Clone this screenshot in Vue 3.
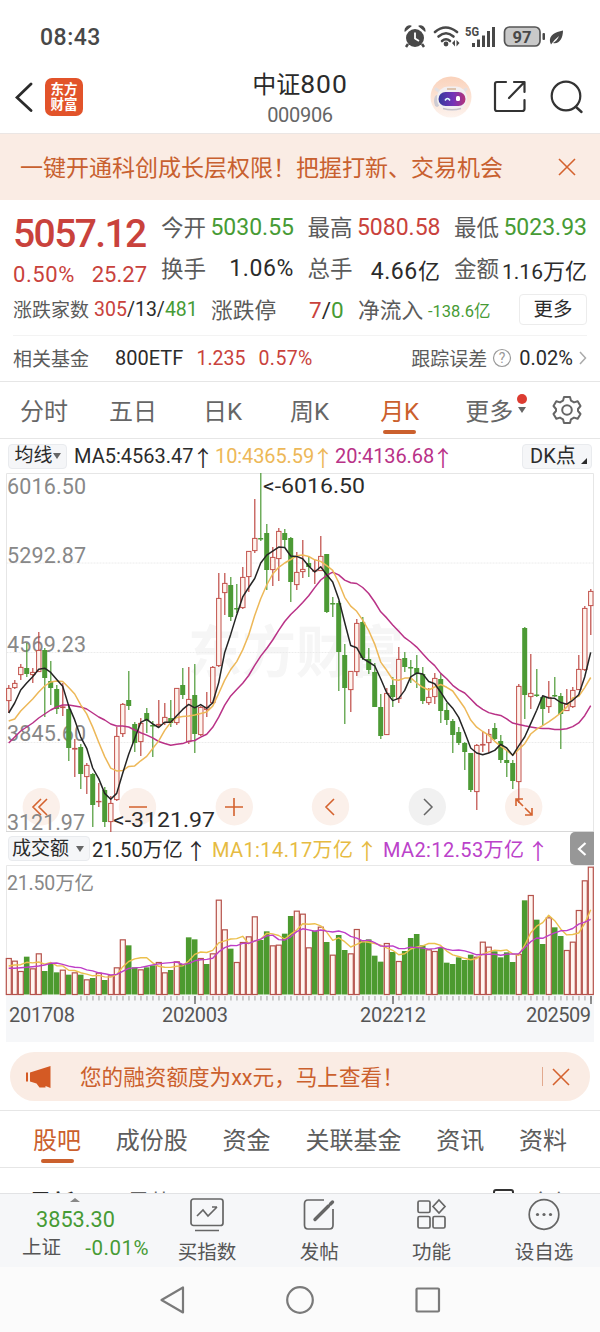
<template>
  <div class="page">
    <div class="status-bar">
      <span class="clock">08:43</span>
      <svg class="status-icons" width="164" height="28" viewBox="0 0 164 28">
        <g fill="#484848" stroke="none">
          <circle cx="11" cy="15" r="9" />
          <path d="M1 8a5 5 0 0 1 6-5zM21 8a5 5 0 0 0-6-5z" stroke="#484848" stroke-width="1.2" stroke-linejoin="round" />
          <path d="M4 21l-2 3M18 21l2 3" stroke="#484848" stroke-width="2.5" />
        </g>
        <path d="M11 9.5v6l4 2.5" fill="none" stroke="#fff" stroke-width="1.8" />
        <g fill="none" stroke="#484848" stroke-width="2.6" stroke-linecap="round">
          <path d="M31 9q10.500-9 22 0" />
          <path d="M34.500 13.500q7.500-6.500 15 0" />
          <path d="M38 18q4-3.500 8 0" />
        </g>
        <circle cx="42" cy="21" r="2.4" fill="#484848" />
        <path d="M48 20l3-3v6.500zM55.500 20l-3-3v6.500z" fill="#484848" />
        <text x="61" y="13" class="net" textLength="14" lengthAdjust="spacingAndGlyphs">5G</text>
        <g fill="#484848">
          <rect x="68" y="20" width="3" height="4" /><rect x="73" y="16.500" width="3" height="7.500" />
          <rect x="78" y="12.500" width="3" height="11.500" /><rect x="83" y="8" width="3" height="16" />
          <rect x="88" y="4" width="3" height="20" />
        </g>
        <rect x="100.500" y="4" width="35.500" height="19" rx="5" fill="#c9c9c9" stroke="#555" stroke-width="1.7" />
        <text x="108.500" y="20" class="batt" textLength="19" lengthAdjust="spacingAndGlyphs">97</text>
        <rect x="138.500" y="10" width="2.500" height="7" rx="1" fill="#484848" />
        <path d="M146 19c-1-7 5-10 13-11.500c0 8-4 14-10 12.500q4-2 6-7q-4 3-8 8.500z" fill="#484848" />
      </svg>
    </div>

    <header class="nav">
      <svg class="back" width="18" height="30" viewBox="0 0 18 30">
        <path d="M16 2L2 15.500L16 28.500" fill="none" stroke="#2b2b2b" stroke-width="2.8" stroke-linecap="round" />
      </svg>
      <div class="logo"><span>东方</span><span>财富</span></div>
      <div class="title">
        <h1>中证<b>800</b></h1>
        <p>000906</p>
      </div>
      <svg class="robot" width="42" height="42" viewBox="0 0 42 42">
        <defs>
          <linearGradient id="halo" x1="0" y1="0" x2="0" y2="1">
            <stop offset="0" stop-color="#fad2bb" /><stop offset="1" stop-color="#fdf3ee" />
          </linearGradient>
          <linearGradient id="visor" x1="0" y1="0" x2="1" y2="0">
            <stop offset="0" stop-color="#33389c" /><stop offset="0.55" stop-color="#7433b8" /><stop offset="1" stop-color="#b53378" />
          </linearGradient>
        </defs>
        <circle cx="21" cy="21" r="20.500" fill="url(#halo)" />
        <path d="M6 13l4 3M36 13l-3 3" stroke="#e4dfe0" stroke-width="3" stroke-linecap="round" />
        <ellipse cx="7" cy="25" rx="3" ry="6" fill="#cfccd3" />
        <rect x="7" y="10.500" width="30" height="24" rx="11.500" fill="#f2eff1" />
        <path d="M13 32.500q9 2.500 18 0" fill="none" stroke="#c6c1c8" stroke-width="1.500" />
        <path d="M17 13h9" stroke="#dcc3ae" stroke-width="2" />
        <rect x="8.500" y="16" width="27" height="14" rx="7" fill="url(#visor)" />
        <path d="M15 24.500q2.500-4 5 0" fill="none" stroke="#dff" stroke-width="1.500" />
        <rect x="26" y="20" width="4" height="5" rx="1.500" fill="#fff" />
      </svg>
      <svg class="share" width="34" height="34" viewBox="0 0 34 34">
        <path d="M13 2H4Q2 2 2 4V29Q2 31 4 31H29Q31.500 31 31.500 29V20M21 2H31.500V12M31 2.500L16 18" fill="none" stroke="#333" stroke-width="2.200" stroke-linecap="round" stroke-linejoin="round" />
      </svg>
      <svg class="search" width="34" height="34" viewBox="0 0 34 34">
        <circle cx="16" cy="16" r="14.300" fill="none" stroke="#333" stroke-width="2.200" />
        <path d="M26 27l5.500 5" stroke="#333" stroke-width="2.400" stroke-linecap="round" />
      </svg>
    </header>

    <div class="banner">
      <span>一键开通科创成长层权限！把握打新、交易机会</span>
      <svg width="18" height="18" viewBox="0 0 18 18"><path d="M1 1L17 17M17 1L1 17" stroke="#d4622e" stroke-width="1.600" /></svg>
    </div>

    <section class="quote">
      <div class="quote-top">
        <div class="last red">
          <strong>5057.12</strong>
          <div class="change"><span class="pct">0.50%</span><span>25.27</span></div>
        </div>
        <div v-for="(col, i) in quoteCols" :key="i" class="quote-col">
          <div v-for="c in col" :key="c.label" class="cell">
            <label>{{ c.label }}</label>
            <span :class="c.color">{{ c.value }}<i v-if="c.unit">{{ c.unit }}</i></span>
          </div>
        </div>
      </div>
      <div class="row3">
        <span class="lbl small w-count">涨跌家数</span>
        <span class="w-305"><em class="red">305</em>/13/<em class="green">481</em></span>
        <span class="lbl w-stop">涨跌停</span>
        <span class="w-70"><em class="red">7</em>/<em class="green">0</em></span>
        <span class="lbl w-flow">净流入</span>
        <span class="w-net green">-138.6亿</span>
        <button class="more">更多</button>
      </div>
      <div class="row4">
        <span class="lbl small w-fund">相关基金</span>
        <span class="w-etf">800ETF</span>
        <span class="w-nav red">1.235</span>
        <span class="w-pct red">0.57%</span>
        <span class="lbl small err">跟踪误差</span>
        <svg width="20" height="20" viewBox="0 0 20 20">
          <circle cx="10" cy="10" r="8.500" fill="none" stroke="#999" stroke-width="1.200" />
          <text x="10" y="15" text-anchor="middle" font-size="14" fill="#999">?</text>
        </svg>
        <span class="w-err">0.02%</span>
        <svg width="8" height="14" viewBox="0 0 8 14"><path d="M1 1l5.500 6L1 13" fill="none" stroke="#aaa" stroke-width="1.500" /></svg>
      </div>
    </section>

    <nav class="periods">
      <span v-for="p in periods" :key="p" :class="{ active: p === '月K' }">{{ p }}</span>
      <span class="more-tab">更多<i class="dot"></i><i class="caret"></i></span>
      <svg width="30" height="30" viewBox="0 0 30 30" fill="none" stroke="#666" stroke-width="2" stroke-linejoin="round">
        <path d="M12 2h6l1 3.700l3 1.700l3.700-1.200l2.800 4.800l-2.500 3v2l2.500 3l-2.800 4.800l-3.700-1.200l-3 1.700l-1 3.700h-6l-1-3.700l-3-1.700l-3.700 1.200l-2.800-4.800l2.500-3v-2l-2.500-3l2.800-4.800l3.700 1.200l3-1.700z" />
        <circle cx="15" cy="15" r="4.800" />
      </svg>
    </nav>

    <div class="ma-row">
      <button class="tag ma-tag">均线<i class="caret"></i></button>
      <span class="ma5">MA5:4563.47</span><i class="up">↑</i>
      <span class="ma10">10:4365.59</span><i class="up">↑</i>
      <span class="ma20">20:4136.68</span><i class="up">↑</i>
      <button class="tag dk-tag">DK点<i class="corner"></i></button>
    </div>

    <svg class="kline" width="600" height="359" viewBox="0 473 600 359">
      <text x="188" y="672" class="watermark" textLength="216" lengthAdjust="spacingAndGlyphs">东方财富</text>
      <path d="M6.500 563H593M6.500 652.500H593M6.500 742.500H593" stroke="#ececec" stroke-dasharray="2 1" />
      <path d="M6.500 831V473.500H593.500V831" fill="none" stroke="#e6e6e6" />
      <path d="M6 831.500H594" stroke="#d8d8d8" />
      <g class="levels">
        <text x="7" y="494" textLength="79">6016.50</text>
        <text x="7" y="563" textLength="79">5292.87</text>
        <text x="7" y="652" textLength="79">4569.23</text>
        <text x="7" y="741" textLength="79">3845.60</text>
      </g>
      <circle v-for="x in [41.300, 137.500, 234.300, 330.500, 427.300, 523.700]" :key="x" :cx="x" cy="806.800" r="18.700" :fill="x === 427.300 ? '#f1f1f1' : '#fbf0ea'" />
      <text x="7" y="829.500" class="level" textLength="78">3121.97</text>
      <g v-for="(c, i) in candles" :key="i">
        <rect :x="xAt(i) - 0.500" :y="c[3]" width="1.200" :height="c[4] - c[3]" :fill="c[0] ? '#bf4a45' : '#4c9a35'" />
        <rect v-if="c[0]" :x="xAt(i) - 2.100" :y="c[1] + 0.400" width="4.400" :height="Math.max(c[2] - c[1] - 0.800, 0.400)" fill="#fff4ef" stroke="#c2524c" />
        <rect v-else :x="xAt(i) - 2.500" :y="c[1]" width="5" :height="c[2] - c[1]" fill="#4c9a35" />
      </g>
      <g fill="none" stroke-width="1.500" stroke-linejoin="round">
        <polyline :points="ma20" stroke="#b93287" />
        <polyline :points="ma10" stroke="#edb858" />
        <polyline :points="ma5" stroke="#252525" />
      </g>
      <text x="263" y="493" class="mark" textLength="102" lengthAdjust="spacingAndGlyphs">&lt;-6016.50</text>
      <text x="113" y="827" class="mark" textLength="102" lengthAdjust="spacingAndGlyphs">&lt;-3121.97</text>
      <g fill="none" stroke="#d4622e" stroke-width="1.600">
        <path d="M41 799l-8 8l8 8M47 799l-8 8l8 8M129 807h18M225 807h18M234 798v18M334 799l-8 8l8 8" />
        <path d="M516 806v-7h7M516 799l7 7M525 808l7 7M532 808v7h-7" />
      </g>
      <path d="M424 799l8 8l-8 8" fill="none" stroke="#666" stroke-width="1.500" />
    </svg>

    <div class="vol-row">
      <button class="tag vol-tag">成交额<i class="caret"></i></button>
      <span class="v0">21.50万亿</span><i class="up">↑</i>
      <span class="v1">MA1:14.17万亿</span><i class="up">↑</i>
      <span class="v2">MA2:12.53万亿</span><i class="up">↑</i>
      <div class="handle">
        <svg width="10" height="16" viewBox="0 0 10 16"><path d="M8.500 2L2 8l6.500 6" fill="none" stroke="#fff" stroke-width="2.200" /></svg>
      </div>
    </div>

    <svg class="volume" width="600" height="177" viewBox="0 865 600 177">
      <rect x="6" y="995" width="588" height="47" fill="#f6f7f9" />
      <path d="M6.500 995V865.500H593.500V995" fill="none" stroke="#e8e8e8" />
      <text x="7" y="890" class="level cjk" textLength="87">21.50万亿</text>
      <g v-for="(v, i) in volumes" :key="i">
        <rect v-if="v.up" :x="xAt(i) - 2.400" :y="v.y + 0.500" width="5" :height="994 - v.y" fill="#fff5f0" stroke="#b5524b" stroke-width="1.200" />
        <rect v-else :x="xAt(i) - 2.800" :y="v.y" width="5.600" :height="994.500 - v.y" fill="#4c9a2f" />
      </g>
      <g fill="none" stroke-width="1.400" stroke-linejoin="round">
        <polyline :points="vma5" stroke="#ecc04d" />
        <polyline :points="vma10" stroke="#bf3fc8" />
      </g>
      <g fill="#bcbcbc">
        <rect v-for="n in 86" :key="n" :x="xAt(n + 11) - 0.500" y="996" width="1.500" height="4.500" />
      </g>
      <path d="M195 996v8M393 996v8M591 996v8" stroke="#777" stroke-width="1.600" />
      <g class="dates">
        <text x="9" y="1022" textLength="66">201708</text>
        <text x="162" y="1022" textLength="66">202003</text>
        <text x="360" y="1022" textLength="66">202212</text>
        <text x="526" y="1022" textLength="65">202509</text>
      </g>
    </svg>

    <div class="notice">
      <svg width="28" height="24" viewBox="0 0 28 24">
        <path d="M1 7.500h2v9H1zM5 7.500L25.500 1v22l-5-2v1.500h-6l-3-4L5 16.500z" fill="#d45a24" />
      </svg>
      <span>您的融资额度为xx元，马上查看！</span>
      <i class="bar"></i>
      <svg width="18" height="18" viewBox="0 0 18 18"><path d="M1 1L17 17M17 1L1 17" stroke="#d4622e" stroke-width="1.600" /></svg>
    </div>

    <nav class="sections">
      <span v-for="s in sections" :key="s" :class="{ active: s === '股吧' }">{{ s }}</span>
    </nav>

    <div class="posts">
      <b>最新</b><span>最热</span>
      <i class="box"></i><span class="all">全部</span>
    </div>

    <footer class="toolbar">
      <div class="index">
        <i class="tri"></i>
        <div class="green pts">3853.30</div>
        <div class="sub"><span>上证</span><span class="green">-0.01%</span></div>
      </div>
      <div class="tool">
        <svg width="36" height="36" viewBox="0 0 36 36">
          <rect x="2" y="2" width="32" height="26.500" rx="2.500" /><path d="M6 33.500h24M8 19l6-6l5 6l9-9M23 10h5" />
        </svg>
        <span>买指数</span>
      </div>
      <div class="tool">
        <svg width="36" height="36" viewBox="0 0 36 36">
          <path d="M23 3H7Q3.500 3 3.500 7V28Q3.500 32 7 32H28.500Q32 32 32 28V12" /><path d="M14 22.500L27.500 9M29.500 7l2-2" stroke-width="3.400" stroke-linecap="round" />
        </svg>
        <span>发帖</span>
      </div>
      <div class="tool">
        <svg width="36" height="36" viewBox="0 0 36 36">
          <rect x="4" y="4" width="12" height="11.500" rx="1.500" /><rect x="4" y="19.500" width="12" height="11.500" rx="1.500" />
          <rect x="19" y="19.500" width="12" height="11.500" rx="1.500" /><path d="M25 3l6 6.500l-6 6.500l-6-6.500z" />
        </svg>
        <span>功能</span>
      </div>
      <div class="tool">
        <svg width="36" height="36" viewBox="0 0 36 36">
          <circle cx="18" cy="17.500" r="14.800" />
          <g fill="#666" stroke="none"><circle cx="11.500" cy="17.500" r="1.600" /><circle cx="18" cy="17.500" r="1.600" /><circle cx="24.500" cy="17.500" r="1.600" /></g>
        </svg>
        <span>设自选</span>
      </div>
    </footer>

    <div class="sys-nav">
      <svg width="30" height="30" viewBox="0 0 30 30"><path d="M25 2.500v25L3.500 15z" /></svg>
      <svg width="30" height="30" viewBox="0 0 30 30"><circle cx="15" cy="15" r="12.800" /></svg>
      <svg width="30" height="30" viewBox="0 0 30 30"><rect x="3.500" y="3.500" width="22.500" height="23" rx="1" /></svg>
    </div>
  </div>
</template>

<script setup>
const quoteCols = [
  [
    { label: '今开', value: '5030.55', color: 'green' },
    { label: '换手', value: '1.06%', color: 'pct' }
  ],
  [
    { label: '最高', value: '5080.58', color: 'red' },
    { label: '总手', value: '4.66', unit: '亿', color: 'pct' }
  ],
  [
    { label: '最低', value: '5023.93', color: 'green' },
    { label: '金额', value: '1.16', unit: '万亿', color: 'tight' }
  ]
];
const periods = ['分时', '五日', '日K', '周K', '月K'];
const sections = ['股吧', '成份股', '资金', '关联基金', '资讯', '资料'];

// [涨?, 实体顶, 实体底, 最高, 最低]
const candles = [
  [1, 688, 701, 685, 713], [1, 683, 688, 680, 689], [1, 667, 675, 664, 680], [0, 668, 674, 643, 677],
  [1, 672, 675, 668, 683], [1, 650, 672, 632, 672], [0, 650, 678, 648, 717], [0, 681, 688, 661, 705],
  [0, 689, 709, 685, 714], [1, 706.5, 708, 683, 716], [0, 709, 748, 706, 761], [1, 748, 749.5, 739, 777],
  [0, 747, 774, 744, 789], [1, 765, 777, 763, 794], [0, 774, 805, 773, 827], [1, 801, 802, 783, 807],
  [0, 790, 822, 787, 827], [1, 803, 822, 796, 832], [1, 736, 800, 727, 801], [1, 704, 734, 703, 737],
  [0, 700, 706, 671, 710], [0, 724, 743, 722, 752], [1, 723, 742, 718, 756], [0, 713, 721, 708, 733],
  [0, 725, 726.5, 721, 757], [1, 724, 725.5, 700, 727], [1, 717, 723, 703, 725], [0, 718, 723, 700, 727],
  [1, 688, 723, 688, 725], [0, 685, 695, 668, 699], [1, 699, 742, 667, 744], [0, 695, 734, 664, 753],
  [1, 707, 735, 706, 736], [1, 707, 710, 692, 717], [1, 667, 703, 666, 704], [1, 598, 666, 573, 667],
  [1, 583, 593, 573, 615], [0, 585, 617, 577, 621], [0, 608, 609.5, 584, 613], [1, 577, 608, 567, 609],
  [1, 551, 577, 551, 592], [1, 538, 551, 499, 553], [0, 538, 539.5, 473, 541], [0, 533, 570, 524, 590],
  [1, 557, 570, 547, 586], [1, 531, 559, 528, 581], [0, 533, 540, 529, 547], [0, 538, 582, 537, 602],
  [1, 572, 585, 552, 590], [1, 569, 572, 540, 578], [0, 563, 567, 557, 577], [1, 570, 571.5, 560, 584],
  [1, 556, 571, 536, 571], [0, 554, 612, 554, 613], [0, 603, 604.5, 597, 617], [0, 603, 652, 601, 691],
  [0, 655, 688, 644, 724], [1, 671, 690, 671, 712], [1, 623, 672, 619, 676], [0, 622, 658, 617, 660],
  [0, 659, 670, 648, 674], [0, 672, 707, 663, 707], [0, 707, 736, 694, 739], [1, 693, 735, 688, 735],
  [0, 685, 697, 677, 707], [1, 659, 699, 647, 703], [0, 658, 667, 652, 672], [0, 667, 668.5, 660, 683],
  [0, 668, 674, 655, 688], [0, 674, 701, 667, 704], [1, 697, 703, 688, 705], [1, 678, 697, 673, 704],
  [0, 679, 711, 673, 723], [0, 710, 720, 703, 725], [0, 721, 735, 719, 753], [0, 732, 743, 727, 745],
  [0, 743, 752, 742, 770], [0, 753, 790, 753, 792], [1, 745, 792, 744, 810], [1, 744, 745.5, 732, 752],
  [1, 734, 743, 729, 753], [0, 728, 739, 723, 740], [0, 741, 760, 735, 763], [0, 760, 763, 750, 777],
  [0, 763, 781, 760, 789], [1, 686, 782, 684, 803], [0, 628, 695, 627, 719], [1, 693, 697, 654, 709],
  [0, 694.5, 696, 669, 697], [0, 697, 709, 696, 725], [1, 697, 707, 681, 713], [0, 695, 696.5, 677, 697],
  [0, 696, 714, 693, 749], [1, 704, 711, 689, 711], [1, 690, 707, 687, 708], [1, 669, 690, 655, 690],
  [1, 608, 670, 606, 671], [1, 591, 606, 589, 635]
];

// r = 涨, g = 跌
const volumeData =
  'r384 r392 r423 g380 r415 r370 g423 g400 g427 r419 g434 r427 g434 r448 g444 r428 g450 r436 r412 r328 ' +
  'g346 g412 r418 g412 g406 r396 r427 g420 r394 g402 g322 g328 r384 g402 r370 r209 r298 g356 r396 r336 ' +
  'r319 r259 g330 g304 r346 r344 g311 g258 r242 r251 r352 g302 r290 g336 r374 g315 g360 r370 r297 g330 ' +
  'g328 g377 g395 r339 g366 r393 g363 g324 g312 g346 r358 r363 g352 g398 g402 g382 g390 g374 r380 r335 ' +
  'r350 g364 g382 g367 g396 r372 g211 r195 g269 g342 r262 g292 g318 r360 r335 r240 r151 r110';
const toY = (n) => 830 + n / 3;
const volumes = volumeData.split(' ').map((s) => ({ up: s[0] === 'r', y: toY(Number(s.slice(1))) }));

const xAt = (i) => 8.7 + i * 6;

// 均线：前 n-1 根用 head 补齐
const average = (values, n, head) =>
  values
    .map((_, i) => {
      const y = i < n - 1 ? head[i] : values.slice(i - n + 1, i + 1).reduce((a, b) => a + b, 0) / n;
      return `${xAt(i).toFixed(1)},${y.toFixed(1)}`;
    })
    .join(' ');

const closes = candles.map((c) => (c[0] ? c[1] : c[2]));
const ma5 = average(closes, 5, [713, 703, 690, 683]);
const ma10 = average(closes, 10, [721, 719, 711, 705, 699, 692, 686, 682, 681]);
const ma20 = average(closes, 20, [743, 737, 731, 727, 723, 718, 714, 710, 707, 705, 705, 706, 707, 709, 713, 717, 720, 724, 726]);

const volY = volumes.map((v) => v.y);
const vma5 = average(volY, 5, [408, 405, 404, 397].map(toY));
const vma10 = average(volY, 10, [415, 415, 413, 412, 410, 408, 405, 400, 399].map(toY));
</script>

<style>
body {
  background: #fff;
}
</style>

<style scoped>
.page {
  width: 600px;
  height: 1332px;
  overflow: hidden;
  background: #fff;
  color: #2b2b2b;
  font-family: Roboto, 'Noto Sans CJK SC', sans-serif;
  font-size: 20px;
  white-space: nowrap;
}
.page * { box-sizing: border-box; }
svg { display: block; flex: none; }
.kline { overflow: visible; }
i, em { font-style: normal; }
button {
  font-family: inherit;
  color: #2b2b2b;
  padding: 0;
}
.red { color: #c9423c; }
.green { color: #479b35; }

/* 状态栏 */
.status-bar {
  height: 61px;
  padding: 13px 0 0 40px;
  display: flex;
}
.clock {
  width: 364px;
  font-size: 23px;
  font-weight: 500;
  line-height: 50px;
  letter-spacing: 0.5px;
  color: #484848;
}
.status-icons { margin-top: 10px; }
.net { font-size: 12px; font-weight: 700; fill: #484848; }
.batt { font-size: 17px; font-weight: 700; fill: #484848; }

/* 顶部导航 */
.nav {
  height: 73px;
  border-bottom: 1px solid #ebe6e4;
  display: flex;
  align-items: center;
  padding-left: 15px;
}
.logo {
  margin-left: 12px;
  width: 38px;
  height: 38px;
  border-radius: 7px;
  background: #e2532a;
  color: #fff;
  font-size: 13.5px;
  font-weight: 700;
  line-height: 15px;
  display: flex;
  flex-direction: column;
  align-items: center;
  justify-content: center;
}
.title {
  width: 170px;
  margin-left: 132px;
  text-align: center;
}
.title h1 {
  margin: 0;
  font-size: 24px;
  line-height: 34px;
  font-weight: 400;
}
.title b {
  font-weight: 400;
  font-size: 26.5px;
  letter-spacing: 1px;
}
.title p {
  margin: 0;
  font-size: 20px;
  line-height: 26px;
  letter-spacing: -0.3px;
  color: #666;
}
.robot { margin-left: 45px; }
.share { margin-left: 21px; }
.search { margin-left: 23px; }

.banner {
  height: 66px;
  background: #faece4;
  color: #c8602f;
  font-size: 23px;
  padding: 0 24px 0 20px;
  display: flex;
  align-items: center;
  justify-content: space-between;
}
.banner span { margin-top: -2px; }

/* 报价区 */
.quote {
  height: 181px;
  padding: 7px 13px 0;
}
.quote-top {
  display: flex;
  height: 82px;
}
.last { width: 134px; margin-right: 14px; }
.last strong {
  display: block;
  font-size: 39px;
  font-weight: 500;
  line-height: 54px;
  letter-spacing: -1.6px;
}
.change {
  display: flex;
  justify-content: space-between;
  font-size: 22px;
  line-height: 28px;
}
.pct { letter-spacing: 0.6px; }
.quote-col { width: 133px; margin-right: 13.5px; }
.quote-col:last-child { margin-right: 0; }
.cell {
  height: 41px;
  display: flex;
  align-items: center;
  justify-content: space-between;
  font-size: 23px;
}
.cell label { font-size: 22.5px; margin-top: -4px; color: #5b5b5b; }
.cell i { font-size: 22px; }
.cell .tight { font-size: 21px; }
.lbl { font-size: 21.7px; color: #5b5b5b; margin-top: -2px; }
.lbl.small { font-size: 19px; }
.row3 {
  height: 46px;
  display: flex;
  align-items: center;
  border-bottom: 1px solid #f3f3f3;
  padding-bottom: 6px;
  margin-top: 1px;
}
.w-count { width: 81px; }
.w-305 { width: 117px; font-size: 19.5px; }
.w-stop { width: 98px; }
.w-70 { width: 49px; font-size: 22.5px; }
.w-flow { width: 70px; }
.w-net { width: 91px; font-size: 16.5px; }
.more {
  width: 68px;
  height: 31px;
  background: #fff;
  border: 1.5px solid #ececec;
  border-radius: 4px;
  font-size: 19.5px;
  line-height: 26px;
}
.row4 {
  height: 44px;
  display: flex;
  align-items: center;
}
.row4 .red { font-size: 19.5px; }
.w-fund { width: 102px; }
.w-etf { width: 81.5px; }
.w-nav { width: 62px; }
.w-pct { letter-spacing: 0.4px; }
.row4 .err { margin: -2px 5px 0 auto; }
.w-err { margin: 0 6px 0 7px; }

/* 周期 */
.periods {
  height: 58px;
  border-top: 1px solid #e6e6e6;
  border-bottom: 1px solid #e6e6e6;
  padding-left: 20px;
  display: flex;
  align-items: center;
  font-size: 24px;
  color: #666;
}
.periods > span {
  height: 56px;
  line-height: 60px;
  position: relative;
  margin-right: 48px;
}
.periods > span:nth-child(1) { margin-right: 41px; }
.periods > span:nth-child(2) { margin-right: 46px; }
.periods > span:nth-child(4) { margin-right: 51px; }
.periods > span:nth-child(5) { margin-right: 46px; }
.periods > span.more-tab { margin-right: 26px; }
.active { color: #cb602d; }
.active::after {
  content: '';
  position: absolute;
  left: 50%;
  bottom: 4px;
  width: 33px;
  height: 4px;
  margin-left: -16.5px;
  border-radius: 2px;
  background: #cb602d;
}
.caret {
  display: inline-block;
  border: 4px solid transparent;
  border-top: 6px solid #666;
  border-bottom: 0;
}
.more-tab { padding-right: 13px; }
.more-tab .caret { position: absolute; right: 0; top: 25px; }
.dot {
  position: absolute;
  right: -1px;
  top: 12px;
  width: 10px;
  height: 10px;
  border-radius: 50%;
  background: #dc3c31;
}

/* 指标行 */
.ma-row, .vol-row {
  display: flex;
  align-items: center;
  padding-left: 8px;
}
.ma-row > *, .vol-row > * { flex: none; }
.ma-row { height: 34px; padding-right: 8px; }
.vol-row { height: 33px; padding-right: 6px; }
.tag {
  height: 25px;
  background: #f5f6f8;
  border: 1px solid #e9ebee;
  border-radius: 4px;
  font-size: 19px;
  line-height: 22px;
  display: flex;
  align-items: center;
  justify-content: center;
}
.ma-tag { width: 59px; margin-right: 7px; }
.vol-tag { width: 82px; margin-right: 2px; justify-content: space-between; padding: 0 5px 0 3px; }
.dk-tag { width: 70px; margin-left: auto; font-size: 20px; justify-content: flex-start; padding-left: 7px; }
.corner {
  border: 3px solid #2b2b2b;
  border-top-color: transparent;
  border-left-color: transparent;
  margin: 10px 0 0 5px;
}
.up {
  width: 14px;
  margin-left: 3px;
  margin-right: 5px;
  text-indent: -4px;
  font-size: 22px;
  font-family: 'Noto Sans CJK SC', sans-serif;
  line-height: 24px;
}
.ma5 { width: 119px; }
.ma10, .ma20 { width: 98px; letter-spacing: -0.1px; }
.ma10, .ma10 + .up { color: #edb858; }
.ma20, .ma20 + .up { color: #b93287; }
.v0 { width: 98px; }
.v1, .v2 { width: 149px; }
.v0 { letter-spacing: 0.1px; }
.v1, .v2 { letter-spacing: 0.4px; }
.v1, .v1 + .up { color: #e6bb42; }
.v2, .v2 + .up { color: #bb42ca; }
.vol-row .up { margin-left: -1px; margin-right: 9px; }
.handle {
  width: 24px;
  height: 33px;
  margin-left: auto;
  border-radius: 5px 0 0 5px;
  background: #979797;
  display: flex;
  align-items: center;
  justify-content: center;
}
.levels, .level { fill: #888; font-size: 21.5px; }
.level.cjk { font-size: 19.5px; }
.mark { fill: #2b2b2b; font-size: 21px; }
.dates { fill: #555; font-size: 20px; }
.watermark { fill: #f6f6f6; font-size: 56px; font-weight: 700; }

.notice {
  height: 49px;
  margin: 10px 10px 9px;
  border-radius: 25px;
  background: #faece4;
  color: #cb602d;
  font-size: 21.6px;
  display: flex;
  align-items: center;
  padding: 0 20px 0 15px;
}
.notice span { margin: -2px 0 0 27px; }
.bar {
  width: 1px;
  height: 19px;
  margin: 0 9px 0 auto;
  background: #e2a98e;
}

.sections {
  height: 58px;
  border-top: 1px solid #e6e6e6;
  border-bottom: 1px solid #e6e6e6;
  display: flex;
  align-items: center;
  justify-content: space-between;
  padding: 0 33px;
  font-size: 24px;
  color: #5d5d5d;
}
.sections span { position: relative; height: 56px; line-height: 60px; }

.posts {
  height: 25px;
  overflow: hidden;
  display: flex;
  align-items: flex-start;
  padding: 24px 25px 0 29px;
  font-size: 23px;
  line-height: 24px;
}
.posts b { margin-right: 52px; }
.posts span { color: #666; }
.box {
  width: 21px;
  height: 20px;
  border: 2px solid #333;
  border-radius: 3px;
  margin: -3px 15px 0 auto;
}

/* 底部工具栏 */
.toolbar {
  height: 74px;
  background: #f6f7f9;
  border-top: 1px solid #e2e3e5;
  display: flex;
}
.index { width: 151px; text-align: center; position: relative; }
.tri {
  position: absolute;
  left: 70px;
  top: 4px;
  border: 5px solid transparent;
  border-top: 0;
  border-bottom: 4px solid #888;
}
.pts { font-size: 21.7px; line-height: 28px; margin-top: 12px; }
.sub {
  display: flex;
  justify-content: space-between;
  padding: 1px 2px 0 22px;
  line-height: 26px;
  color: #555;
  font-size: 19.5px;
}
.sub .green { font-size: 20.5px; letter-spacing: 0.5px; }
.tool {
  width: 112.3px;
  display: flex;
  flex-direction: column;
  align-items: center;
  padding-top: 3px;
  font-size: 19.5px;
  line-height: 39px;
  color: #555;
}
.tool svg { fill: none; stroke: #666; stroke-width: 1.7; }

.sys-nav {
  height: 65px;
  background: #fbfbfb;
  display: flex;
  justify-content: center;
  align-items: center;
  gap: 97.5px;
}
.sys-nav svg { fill: none; stroke: #7a7a7a; stroke-width: 2.2; stroke-linejoin: round; }
</style>
